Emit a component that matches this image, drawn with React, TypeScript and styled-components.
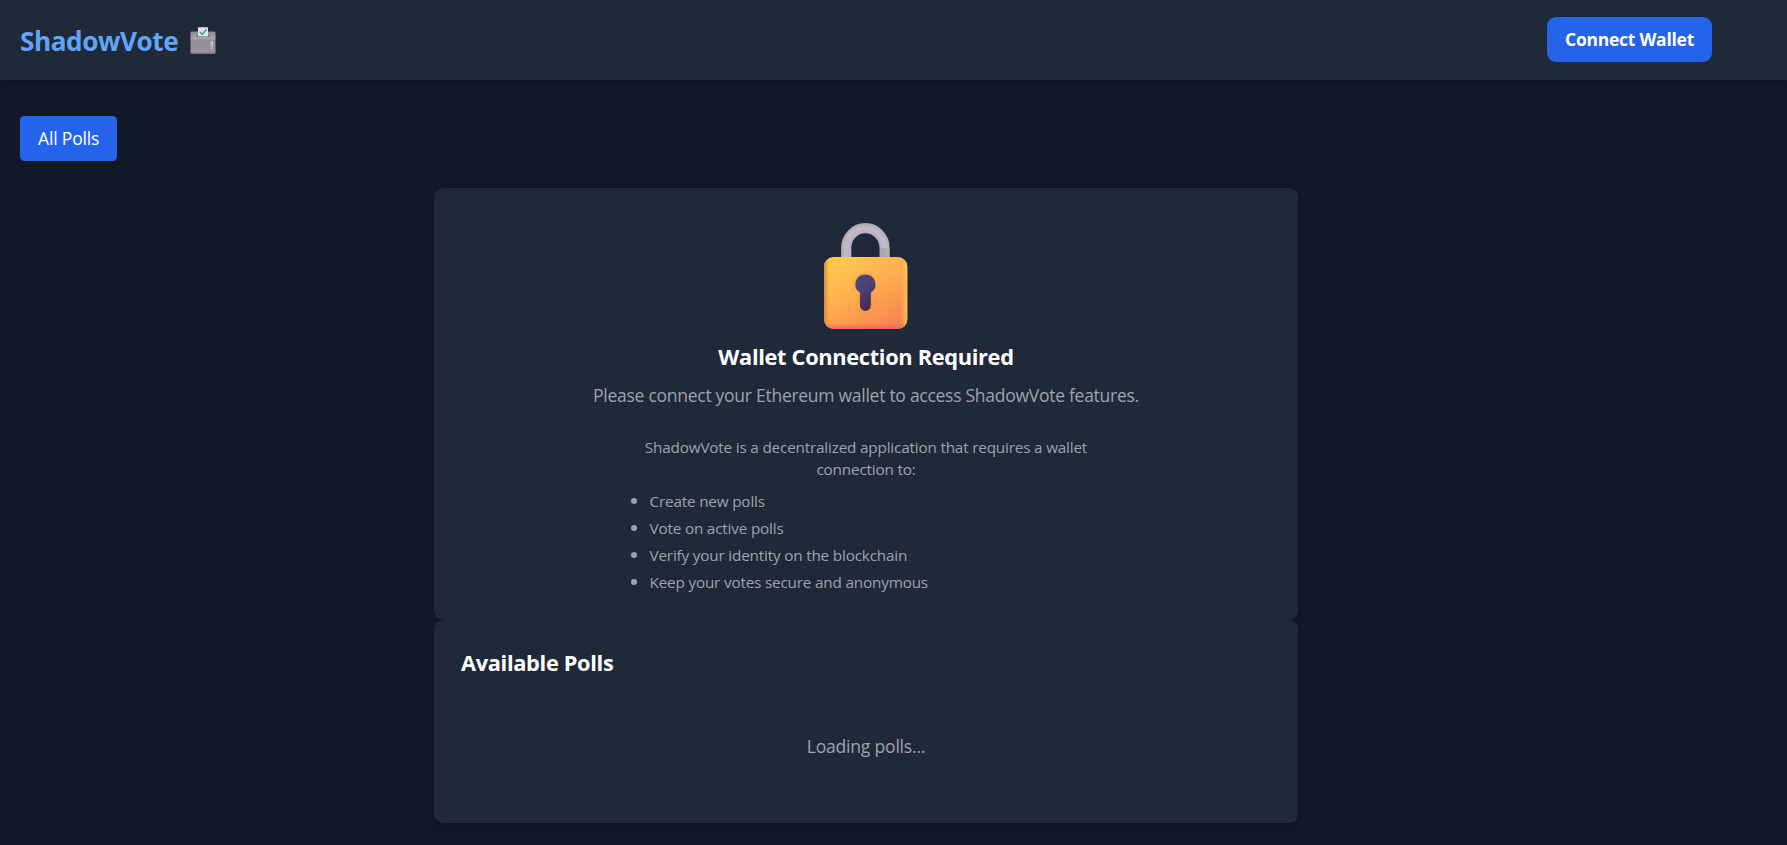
import React from "react";
import styled, { createGlobalStyle } from "styled-components";

const GlobalStyle = createGlobalStyle`
  *, *::before, *::after {
    box-sizing: border-box;
  }

  body {
    margin: 0;
    min-height: 100vh;
    background: #111827;
    color: white;
    font-family: "Open Sans", "Noto Sans", sans-serif;
    font-size: 17.5px;
    line-height: 27px;
    letter-spacing: -0.19px;
  }

  h1, h2, p, ul {
    margin: 0;
    padding: 0;
  }
`;

const Header = styled.header`
  height: 80px;
  padding-right: 55px;
  background: #1f2937;
  box-shadow: 0 4px 6px -1px rgba(0, 0, 0, 0.1), 0 2px 4px -2px rgba(0, 0, 0, 0.1);
`;

const HeaderContent = styled.div`
  max-width: 1728px;
  height: 100%;
  margin: 0 auto;
  padding: 0 18px 1px;
  display: flex;
  align-items: center;
  justify-content: space-between;
`;

const Logo = styled.h1`
  display: flex;
  align-items: center;
  gap: 12px;
  padding-top: 3px;
  color: #60a5fa;
  font-size: 26.2px;
  line-height: 36px;
  letter-spacing: -0.45px;
`;

const Button = styled.button<{ $strong?: boolean }>`
  height: 45px;
  padding: 0 18px 1px;
  border: none;
  border-radius: ${(props) => (props.$strong ? "9px" : "4.5px")};
  background: #2563eb;
  color: white;
  font: inherit;
  font-weight: ${(props) => (props.$strong ? 700 : 400)};
  letter-spacing: ${(props) => (props.$strong ? "-0.26px" : "-0.16px")};
  white-space: nowrap;
  cursor: pointer;
`;

const Main = styled.main`
  padding: 36px 55px 0 0;
`;

const Container = styled.div`
  max-width: 1728px;
  margin: 0 auto;
  padding: 0 18px;
`;

const Tabs = styled.nav`
  display: flex;
  margin-bottom: 27px;
`;

const Card = styled.section`
  width: 864px;
  margin: 0 auto;
  padding: 27px;
  border-radius: 9px;
  background: #1f2937;
  box-shadow: 0 4px 6px -1px rgba(0, 0, 0, 0.1), 0 2px 4px -2px rgba(0, 0, 0, 0.1);
`;

const WalletCard = styled(Card)`
  height: 432px;
  display: flex;
  flex-direction: column;
  align-items: center;
`;

const PollsCard = styled(Card)`
  height: 203px;
`;

const CardTitle = styled.h2<{ $space: number }>`
  margin-bottom: ${(props) => props.$space}px;
  font-size: 21.8px;
  line-height: 31.5px;
  letter-spacing: -0.33px;
`;

const Message = styled.p`
  margin-bottom: 27px;
  color: #9ca3af;
  letter-spacing: -0.27px;
`;

const Details = styled.div`
  width: 504px;
  color: #9ca3af;
  font-size: 15.3px;
  line-height: 22.5px;
`;

const Intro = styled.p`
  padding: 0 20px;
  margin-bottom: 8px;
  text-align: center;
`;

const FeatureList = styled.ul`
  padding-left: 35.5px;
  display: flex;
  flex-direction: column;
  gap: 4.5px;
`;

const Feature = styled.li`
  height: 22.5px;

  &::marker {
    font-size: 18px;
  }
`;

const Loading = styled.p`
  padding: 36px 0;
  color: #9ca3af;
  text-align: center;
`;

const LockSvg = styled.svg`
  flex: none;
  margin: 7px 0 11px;
`;

const features = [
  "Create new polls",
  "Vote on active polls",
  "Verify your identity on the blockchain",
  "Keep your votes secure and anonymous",
];

const BallotIcon = () => (
  <svg width="26" height="28" viewBox="0 0 26 28" aria-hidden="true">
    <defs>
      <linearGradient id="box" x1="0" y1="0" x2="0" y2="1">
        <stop offset="0" stopColor="#8d898c" />
        <stop offset="0.3" stopColor="#a9a5a9" />
        <stop offset="0.42" stopColor="#928c95" />
        <stop offset="0.9" stopColor="#9a929f" />
        <stop offset="1" stopColor="#75617b" />
      </linearGradient>
      <linearGradient id="slot" x1="0" y1="0" x2="0" y2="1">
        <stop offset="0" stopColor="#cbc6ce" />
        <stop offset="1" stopColor="#aaa3af" />
      </linearGradient>
    </defs>
    <rect x="0.5" y="4.5" width="25" height="22.5" rx="1.2" fill="url(#box)" />
    <rect x="6.5" y="8" width="13" height="1.6" rx="0.8" fill="#6b5a70" />
    <rect x="8" y="0.3" width="10" height="9" rx="0.8" fill="#e6dfec" />
    <path d="M9.8 5l2.4 2.4 4.4-5" fill="none" stroke="#35b277" strokeWidth="1.6" />
    <rect x="20.3" y="14" width="2.8" height="8.5" rx="1" fill="url(#slot)" />
  </svg>
);

const LockIcon = () => (
  <LockSvg width="84" height="108" viewBox="0 0 84 108" aria-hidden="true">
    <defs>
      <linearGradient id="lockBody" x1="0.2" y1="0.05" x2="0.8" y2="1">
        <stop offset="0" stopColor="#ffc84d" />
        <stop offset="0.45" stopColor="#fead50" />
        <stop offset="1" stopColor="#f87f50" />
      </linearGradient>
      <linearGradient id="lockRight" x1="0" y1="0" x2="1" y2="0">
        <stop offset="0" stopColor="#ffc252" stopOpacity="0" />
        <stop offset="1" stopColor="#ffc252" />
      </linearGradient>
      <linearGradient id="lockLeft" x1="0" y1="0" x2="1" y2="0">
        <stop offset="0" stopColor="#dd8840" />
        <stop offset="1" stopColor="#dd8840" stopOpacity="0" />
      </linearGradient>
      <linearGradient id="lockBottom" x1="0" y1="0" x2="0" y2="1">
        <stop offset="0" stopColor="#ee6560" stopOpacity="0" />
        <stop offset="1" stopColor="#ee6560" />
      </linearGradient>
      <radialGradient id="shackle" gradientUnits="userSpaceOnUse" cx="41.5" cy="26" r="24.5">
        <stop offset="0.55" stopColor="#b09bc4" />
        <stop offset="0.68" stopColor="#bfb5c8" />
        <stop offset="0.84" stopColor="#c0bdc2" />
        <stop offset="1" stopColor="#adabaf" />
      </radialGradient>
      <linearGradient id="shackleLegs" gradientUnits="userSpaceOnUse" x1="17" y1="0" x2="66" y2="0">
        <stop offset="0" stopColor="#a9a7ab" />
        <stop offset="0.1" stopColor="#bebbc0" />
        <stop offset="0.21" stopColor="#bcaecb" />
        <stop offset="0.79" stopColor="#a89fb0" />
        <stop offset="0.9" stopColor="#aaa8ac" />
        <stop offset="1" stopColor="#b9b7bb" />
      </linearGradient>
      <linearGradient id="keyhole" x1="0" y1="0" x2="0.5" y2="1">
        <stop offset="0" stopColor="#4f4878" />
        <stop offset="0.5" stopColor="#4b4272" />
        <stop offset="1" stopColor="#4a2850" />
      </linearGradient>
      <clipPath id="bodyClip">
        <rect x="0" y="35" width="83.3" height="72" rx="9.5" />
      </clipPath>
    </defs>
    <path d="M22.2 26v11M60.6 26v11" fill="none" stroke="url(#shackleLegs)" strokeWidth="10.2" />
    <path d="M22.2 26.2a19.2 20 0 0 1 38.4 0" fill="none" stroke="url(#shackle)" strokeWidth="10.2" />
    <g clipPath="url(#bodyClip)">
      <rect y="35" width="84" height="73" fill="url(#lockBody)" />
      <rect y="35" width="5" height="73" fill="url(#lockLeft)" />
      <rect x="76" y="35" width="8" height="73" fill="url(#lockRight)" />
      <rect y="102" width="84" height="5" fill="url(#lockBottom)" />
    </g>
    <path
      d="M41.5 51.5a10.8 10.8 0 0 0-6 19.5v13.5a5.8 5.8 0 0 0 11.6 0V71a10.8 10.8 0 0 0-5.6-19.5z"
      fill="none"
      stroke="#e8994c"
      strokeOpacity="0.5"
      strokeWidth="2"
    />
    <path
      d="M41.4 52.4a10 10 0 0 0-5.4 18.4v12.7a5.4 5.4 0 0 0 10.8 0V70.8a10 10 0 0 0-5.4-18.4z"
      fill="url(#keyhole)"
    />
  </LockSvg>
);

const App = () => {
  return (
    <>
      <GlobalStyle />
      <Header>
        <HeaderContent>
          <Logo>
            ShadowVote
            <BallotIcon />
          </Logo>
          <Button $strong>Connect Wallet</Button>
        </HeaderContent>
      </Header>

      <Main>
        <Container>
          <Tabs>
            <Button>All Polls</Button>
          </Tabs>

          <WalletCard>
            <LockIcon />
            <CardTitle $space={9}>Wallet Connection Required</CardTitle>
            <Message>Please connect your Ethereum wallet to access ShadowVote features.</Message>
            <Details>
              <Intro>
                ShadowVote is a decentralized application that requires a wallet connection to:
              </Intro>
              <FeatureList>
                {features.map((feature) => (
                  <Feature key={feature}>{feature}</Feature>
                ))}
              </FeatureList>
            </Details>
          </WalletCard>

          <PollsCard>
            <CardTitle $space={18}>Available Polls</CardTitle>
            <Loading>Loading polls...</Loading>
          </PollsCard>
        </Container>
      </Main>
    </>
  );
};

export default App;
